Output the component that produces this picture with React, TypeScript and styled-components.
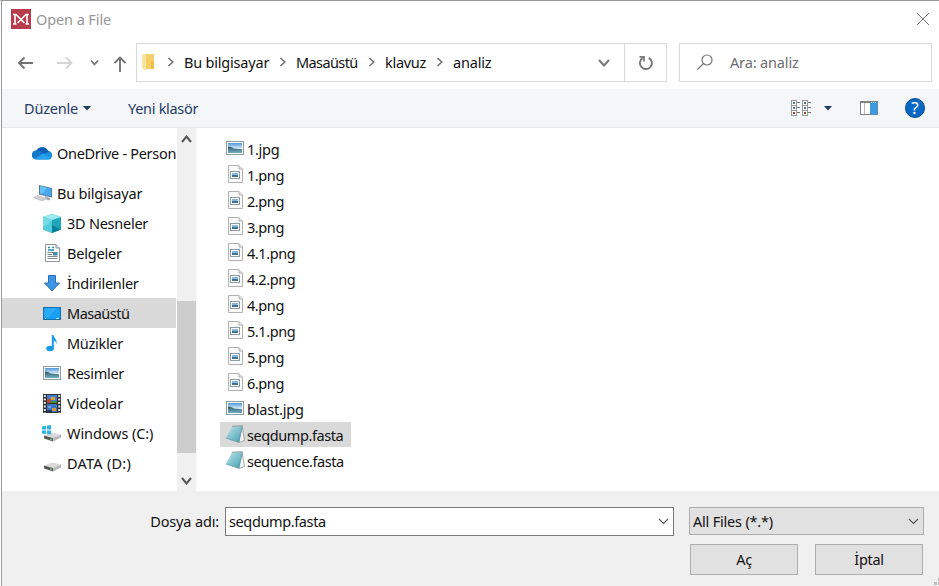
import React from "react";
import styled, { createGlobalStyle } from "styled-components";

const Global = createGlobalStyle`
  * { box-sizing: border-box; }
  body { margin: 0; background: #fff; overflow: hidden; }
  svg { display: block; flex: none; }
`;

const Dialog = styled.div`
  width: 939px;
  height: 586px;
  border-top: 1px solid #999;
  border-left: 1px solid #fff;
  background: #fff;
  font-family: "Noto Sans", "Open Sans", sans-serif;
  font-size: 14.5px;
  color: #111;
`;
const Frame = styled.div`
  height: 585px;
  border-left: 1px solid #999;
  display: flex;
  flex-direction: column;
`;
const Text = styled.span<{ $track?: number }>`
  white-space: nowrap;
  line-height: 20px;
  letter-spacing: ${(p) => p.$track ?? -0.3}px;
`;
const TitleBar = styled.header`
  height: 42px;
  display: flex;
  align-items: flex-start;
  padding: 8px 9px 0 9px;
  color: #969696;
`;
const Title = styled(Text)`
  margin-left: 5px;
  flex: 1;
`;
const CloseIcon = styled.svg`
  margin-top: 3px;
`;
const NavRow = styled.nav`
  height: 46px;
  display: flex;
  align-items: flex-start;
`;
const NavButtons = styled.div`
  width: 134px;
  height: 40px;
  display: flex;
`;
const PathBox = styled.div`
  width: 531px;
  height: 39px;
  border: 1px solid #d9d9d9;
  display: flex;
  align-items: center;
  padding-left: 2px;
`;
const Crumb = styled.div<{ $w: number }>`
  width: ${(p) => p.$w}px;
  padding-bottom: 2px;
  display: flex;
  align-items: center;
  gap: 10px;
`;
const PathEnd = styled.div`
  margin-left: auto;
  height: 37px;
  display: flex;
  align-items: center;
`;
const RefreshCell = styled.div`
  width: 42px;
  height: 37px;
  margin-left: 14px;
  border-left: 1px solid #d9d9d9;
  display: flex;
  align-items: center;
  justify-content: center;
`;
const SearchBox = styled.div`
  width: 253px;
  height: 39px;
  margin-left: 12px;
  border: 1px solid #d9d9d9;
  display: flex;
  align-items: center;
  gap: 16px;
  padding: 0 0 2px 16px;
  color: #6d6d6d;
`;
const CommandBar = styled.div`
  height: 39px;
  background: #f4f6f8;
  border-bottom: 1px solid #e6e8ea;
  display: flex;
  align-items: center;
  padding: 0 14px 0 22px;
  color: #1f3a66;
`;
const Menu = styled.div`
  width: 104px;
  display: flex;
  align-items: center;
  gap: 5px;
`;
const Tools = styled.div`
  margin-left: auto;
  display: flex;
  align-items: center;
`;
const ViewMenu = styled.div`
  display: flex;
  align-items: center;
  gap: 12px;
  margin-right: 28px;
`;
const HelpBadge = styled.div`
  width: 20px;
  height: 20px;
  margin-left: 27px;
  border-radius: 50%;
  border: 1px solid #064d93;
  background: #0868c4;
  color: #fff;
  font-size: 17px;
  line-height: 18px;
  text-align: center;
`;
const Body = styled.main`
  height: 363px;
  display: flex;
`;
const Tree = styled.ul`
  width: 174px;
  margin: 0 1px 0 0;
  padding: 10px 0 0;
  list-style: none;
  overflow: hidden;
`;
const TreeItem = styled.li<{ $root?: boolean; $selected?: boolean; $gap?: boolean }>`
  height: 30px;
  margin-bottom: ${(p) => (p.$gap ? 10 : 0)}px;
  padding-left: ${(p) => (p.$root ? 29 : 39)}px;
  background: ${(p) => (p.$selected ? "#d9d9d9" : "transparent")};
  display: flex;
  align-items: center;
  gap: 4px;
`;
const IconSlot = styled.span<{ $w: number }>`
  width: ${(p) => p.$w}px;
  height: 22px;
  flex: none;
  display: flex;
  align-items: center;
  justify-content: center;
`;
const FolderSlot = styled(IconSlot)`
  justify-content: flex-start;
  padding: 0 0 2px 2px;
`;
const ScrollBar = styled.div`
  width: 20px;
  height: 363px;
  background: #f0f0f0;
  border-right: 1px solid #f8f8f8;
  display: grid;
  grid-template-rows: 173px 152px 38px;
`;
const ScrollEnd = styled.div<{ $bottom?: boolean }>`
  display: flex;
  justify-content: center;
  align-items: ${(p) => (p.$bottom ? "flex-end" : "flex-start")};
  padding: 7px 0 6px;
`;
const Thumb = styled.div`
  background: #cdcdcd;
`;
const Files = styled.ul`
  margin: 0;
  padding: 8px 0 0 23px;
  list-style: none;
  display: flex;
  flex-direction: column;
  align-items: flex-start;
`;
const FileItem = styled.li<{ $selected?: boolean }>`
  height: 26px;
  width: 131px;
  border-bottom: 1px solid #fff;
  padding: 1px 0 0 5px;
  background: ${(p) => (p.$selected ? "#d9d9d9" : "transparent")};
  display: flex;
  align-items: center;
  gap: 2px;
`;
const FileIcon = styled(IconSlot)`
  margin-top: -3px;
`;
const Footer = styled.footer`
  flex: 1;
  background: #f0f0f0;
  display: grid;
  grid-template-columns: 217px 449px 235px;
  grid-template-rows: 29px 31px;
  column-gap: 6px;
  row-gap: 8px;
  padding-top: 16px;
  position: relative;
`;
const FieldLabel = styled.label`
  text-align: right;
  padding-top: 4px;
`;
const Field = styled.div`
  height: 29px;
  background: #fff;
  border: 1px solid #7a7a7a;
  display: flex;
  align-items: center;
  justify-content: space-between;
  padding: 0 4px 1px 3px;
`;
const Select = styled(Field)`
  height: 28px;
  margin-left: 9px;
  width: 235px;
  background: #e1e1e1;
  border-color: #adadad;
  padding: 0 4px 0 3px;
`;
const Actions = styled.div`
  grid-column: 3;
  margin-left: 10px;
  width: 233px;
  display: flex;
  justify-content: space-between;
`;
const Button = styled.button`
  width: 108px;
  height: 31px;
  padding: 0 0 2px;
  border: 1px solid #adadad;
  background: #e1e1e1;
  font: inherit;
  color: #111;
`;
const Grip = styled.svg`
  position: absolute;
  right: 0;
  bottom: 0;
`;

const Chevron = ({ w = 11, h = 6, color = "#666", sw = 2, up = false }) => (
  <svg width={w + 2} height={h + 2} viewBox={`-1 -1 ${w + 2} ${h + 2}`} fill="none" stroke={color} strokeWidth={sw}>
    <path d={up ? `M0 ${h}L${w / 2} .5L${w} ${h}` : `M0 0L${w / 2} ${h - 0.5}L${w} 0`} />
  </svg>
);
const CrumbArrow = () => (
  <svg width="7" height="10" viewBox="0 0 7 10" fill="none" stroke="#777" strokeWidth="1.7">
    <path d="M1.500 1L5.7 5L1.500 9" />
  </svg>
);
const Triangle = () => (
  <svg width="8" height="5" viewBox="0 0 8 5"><path d="M0 0H8L4 4.5Z" fill="#1f3a66" /></svg>
);
const AppLogo = () => (
  <svg width="20" height="20" viewBox="0 0 20 20">
    <rect width="20" height="20" fill="#b83c4c" />
    <path d="M2 5.5H5.5M4 5.5V15M2 15H5.5M18 5.5H14.5M16 5.5V15M18 15H14.5" stroke="#fff" strokeWidth="1.6" fill="none" />
    <path d="M5 5.5L13.5 14M15 5.5L6.5 14" stroke="#fff" strokeWidth="1.6" />
  </svg>
);
const NavIcons = () => (
  <svg width="134" height="40" viewBox="2 43 134 40" fill="none" strokeWidth="1.8">
    <path d="M33 63H19M24.5 57.5L19 63L24.5 68.5" stroke="#717171" />
    <path d="M57 63H71M66 57.5L71.5 63L66 68.5" stroke="#d5d5d5" />
    <path d="M91 60.5L94.5 64.5L98 60.5" stroke="#777" />
    <path d="M120 72V58M114.5 63L120 57.5L125.5 63" stroke="#717171" />
  </svg>
);
const FolderIcon = () => (
  <svg width="16" height="18" viewBox="1 0 16 18">
    <path d="M5 1H14V16H5Z" fill="#f5cf68" />
    <path d="M11 8H14V16H11Z" fill="#efbf50" />
    <path d="M2 1L6 2.5V17.5L2 15.5Z" fill="#fbe3a0" />
  </svg>
);
const RefreshIcon = () => (
  <svg width="16" height="16" viewBox="0 0 16 16" fill="none" stroke="#777" strokeWidth="1.9">
    <path d="M10.8 2.8A6 6 0 1 1 4.5 3.1" />
    <path d="M1.5 1.9H6V6.5" strokeWidth="1.7" />
  </svg>
);
const SearchIcon = () => (
  <svg width="18" height="18" viewBox="0 0 18 18" fill="none" stroke="#777" strokeWidth="1.2">
    <circle cx="11" cy="7" r="5" /><path d="M7.5 10.500L1.5 16.5" />
  </svg>
);
const ViewIcon = () => (
  <svg width="21" height="16" viewBox="0 0 21 16">
    {[0, 11].map((x) => [0, 5, 10].map((y) => (
      <g key={`${x}-${y}`}>
        <rect x={x + 0.5} y={y + 0.5} width="5" height="5" fill="#fff" stroke="#999" />
        <rect x={x + 2} y={y + 2} width="2" height="2" fill={y === 10 ? "#a33c2c" : "#54778c"} />
        <path d={`M${x + 6} ${y + 2.5}h3`} stroke="#777" />
      </g>
    )))}
  </svg>
);
const PaneIcon = () => (
  <svg width="18" height="14" viewBox="0 0 18 14">
    <rect x=".5" y=".5" width="17" height="13" fill="#fff" stroke="#808080" />
    <path d="M1 1.5H17" stroke="#888" />
    <path d="M4.5 2V13" stroke="#bbb" />
    <rect x="10" y="1" width="7.5" height="12.5" fill="#3d9ae2" />
    <path d="M11 1.5H17" stroke="#c5e4f8" strokeDasharray="1 1" />
  </svg>
);
const CloudIcon = () => (
  <svg width="21" height="14" viewBox="0 0 21 14">
    <path d="M4.5 13.5A4.4 4.4 0 0 1 4.5 4.6A6.5 6.5 0 0 1 16 4.8A4.4 4.4 0 0 1 16.5 13.5Z" fill="#1490df" />
    <path d="M4.5 4.6A6.5 6.5 0 0 1 16 4.8L17 6L9.5 8.5Z" fill="#0f5fb5" />
    <path d="M4.5 4.6Q8 4.5 11 7.5L2.5 13A4.4 4.4 0 0 1 4.5 4.6Z" fill="#1377cc" />
    <path d="M2.5 13L11 7.5L19.5 12Q18.5 13.5 16.5 13.5H4.5Z" fill="#28a0eb" />
  </svg>
);
const ComputerIcon = () => (
  <svg width="21" height="20" viewBox="0 0 21 20">
    <path d="M7 2L20 5V14.5L7 11.5Z" fill="#527b9a" />
    <path d="M8 3L19 5.6V13.2L8 10.6Z" fill="#46abf0" />
    <path d="M8 3L15 4.7L10 11L8 10.6Z" fill="#66c0f7" />
    <path d="M13 13L13 16L18 17.5V15Z" fill="#9daab2" />
    <path d="M1 14.5L6 12.5L15 15.5L10 18Z" fill="#dde0e3" stroke="#b4b8bc" strokeWidth=".6" />
    <path d="M3 14.7L12 17M5 13.7L13.5 16.2" stroke="#aaa" strokeWidth=".5" />
  </svg>
);
const CubeIcon = () => (
  <svg width="18" height="19" viewBox="0 0 18 19">
    <path d="M9 0L18 3V15.5L9 19L0 15.5V3Z" fill="#20a6bc" />
    <path d="M0 3L9 0L18 3L9 6Z" fill="#9eebf2" />
    <path d="M0 3L9 6V19L0 15.5Z" fill="#54cddb" />
    <path d="M0 3L9 6L4 11L0 13Z" fill="#75dce6" />
    <path d="M9 11L18 15.5L9 19Z" fill="#08819b" />
  </svg>
);
const DocIcon = () => (
  <svg width="15" height="18" viewBox="0 0 15 18">
    <path d="M.5.5H11L14.5 4V17.5H.5Z" fill="#fff" stroke="#8c9499" />
    <path d="M11 .5V4H14.5" fill="#ddd" stroke="#8c9499" />
    <path d="M3 3.5H5M7 3.5H9M3 6H9" stroke="#238fb7" strokeWidth="1.5" />
    <path d="M2.5 8.5H12.5M2.5 10.5H7M2.5 12.5H12.5M2.5 14.5H12.5" stroke="#7b8990" />
    <path d="M8 8.5H12.5V11.5H8Z" fill="#3b8bb0" />
  </svg>
);
const DownIcon = () => (
  <svg width="16" height="17" viewBox="0 0 16 17">
    <path d="M4.5.5H11.5V8H15.5L8 16L.5 8H4.5Z" fill="#3c96e5" stroke="#2d71b4" />
  </svg>
);
const DesktopIcon = () => (
  <svg width="18" height="13" viewBox="0 0 18 13">
    <rect x=".5" y=".5" width="17" height="12" fill="#17a0f5" stroke="#126fae" />
    <path d="M1 1H14L5 11H1Z" fill="#36b2fa" opacity=".55" />
    <path d="M2 11.5H3M13 11.500H16" stroke="#cdeaff" />
  </svg>
);
const MusicIcon = () => (
  <svg width="12" height="18" viewBox="0 0 12 18">
    <ellipse cx="4" cy="14.5" rx="3.8" ry="2.8" fill="#189bea" />
    <path d="M5.8 1H7.6C7.8 4.5 12 5.5 10.2 10.5C10.5 8 9 6.8 7.8 6.5V14.5H5.8Z" fill="#189bea" />
  </svg>
);
const PhotoIcon = () => (
  <svg width="18" height="14" viewBox="0 0 18 14">
    <defs>
      <linearGradient id="sky" x2="0" y2="1"><stop stopColor="#4f97d8" /><stop offset=".55" stopColor="#d8ecf8" /></linearGradient>
      <linearGradient id="lake" x2="0" y2="1"><stop stopColor="#2f5a60" /><stop offset="1" stopColor="#74adc8" /></linearGradient>
    </defs>
    <rect x=".5" y=".5" width="17" height="13" fill="#fff" stroke="#8f9ba4" />
    <rect x="2" y="2" width="14" height="10" fill="url(#sky)" />
    <path d="M2 5.5Q5 5.5 8 7.5L16 8.2V12H2Z" fill="url(#lake)" />
  </svg>
);
const FilmIcon = () => (
  <svg width="18" height="19" viewBox="0 0 18 19">
    <rect width="18" height="19" fill="#303030" />
    <path d="M1.8 1V19M16.2 1V19" stroke="#e8e8e8" strokeWidth="2" strokeDasharray="2 1.5" />
    <rect x="4" y="1" width="10" height="8" fill="#477fd0" />
    <rect x="4" y="10" width="10" height="8" fill="#3976cc" />
    <path d="M8 3H12V6H8Z" fill="#e0a136" /><path d="M4 5H8V9H4Z" fill="#b94b36" /><path d="M8 7H14V9H8Z" fill="#3f913c" />
    <path d="M5 12H8V14H5Z" fill="#69a2e5" /><path d="M9 14H13V17H9Z" fill="#d59638" /><path d="M4 16H9V18H4Z" fill="#213d65" />
  </svg>
);
const DriveIcon = ({ windows = false }) => (
  <svg width="20" height="20" viewBox="0 0 20 20">
    <path d="M2 12.500L10 9.500L19 11.500L11 15Z" fill="#dadada" />
    <path d="M2 12.500L11 15V18.5L2 15.5Z" fill="#666" />
    <path d="M11 15L19 11.500V14.5L11 18.5Z" fill="#b8b8b8" />
    <path d="M3 14.300L9 16" stroke="#444" /><rect x="8" y="15.5" width="1.5" height="1.5" fill="#68d56c" />
    {windows && <path d="M0 3.500L4 2.8V6.500H0ZM5 2.6L9 2V6.500H5ZM0 7.500H4V11L0 10.500ZM5 7.500H9V11.500L5 11Z" fill="#2ab4e6" />}
  </svg>
);
const PngIcon = () => (
  <svg width="15" height="18" viewBox="0 0 15 18">
    <path d="M.5.5H11L14.5 4V17.5H.5Z" fill="#fafafa" stroke="#b2b2b2" />
    <path d="M11 .5V4H14.5" fill="#e5e5e5" stroke="#b2b2b2" />
    <rect x="2.5" y="6.5" width="9" height="7" fill="#fff" stroke="#8d9ba6" />
    <rect x="4" y="8" width="6" height="4" fill="#82b8e2" /><path d="M4 10L10 10V12H4Z" fill="#46708f" />
  </svg>
);
const NotepadIcon = () => (
  <svg width="19" height="18" viewBox="0 0 19 18">
    <defs>
      <linearGradient id="cover" x1="0" y1="0" x2="1" y2="1"><stop stopColor="#c3e8ec" /><stop offset="1" stopColor="#3f9db1" /></linearGradient>
    </defs>
    <path d="M16 1L18.5 15.500L13 17.5Z" fill="#f4f7f8" stroke="#8a989d" strokeWidth=".8" />
    <path d="M6 1.500L16.500 1L12.500 17.300L0 13Z" fill="url(#cover)" />
    <path d="M0 13L12.500 17.3L16.300 1.5" fill="none" stroke="#5b929d" strokeWidth=".7" />
    <path d="M6 1.3L16.5 .8" stroke="#8c9799" strokeWidth="1.1" />
  </svg>
);

const places = [
  { name: "3D Nesneler", icon: <CubeIcon />, track: -0.25 },
  { name: "Belgeler", icon: <DocIcon />, track: -0.2 },
  { name: "İndirilenler", icon: <DownIcon /> },
  { name: "Masaüstü", icon: <DesktopIcon />, track: -0.5 },
  { name: "Müzikler", icon: <MusicIcon /> },
  { name: "Resimler", icon: <PhotoIcon /> },
  { name: "Videolar", icon: <FilmIcon />, track: 0 },
  { name: "Windows (C:)", icon: <DriveIcon windows />, track: -0.1 },
  { name: "DATA (D:)", icon: <DriveIcon />, track: 0.25 },
];
const files = ["1.jpg", "1.png", "2.png", "3.png", "4.1.png", "4.2.png", "4.png", "5.1.png", "5.png", "6.png", "blast.jpg", "seqdump.fasta", "sequence.fasta"];
const fileIcon = (name: string) =>
  name.endsWith("jpg") ? <PhotoIcon /> : name.endsWith("png") ? <PngIcon /> : <NotepadIcon />;
const fileTrack = (name: string) => (name === "blast.jpg" ? -0.2 : name.endsWith("jpg") ? -0.3 : -0.42);
const crumbs = [
  { name: "Bu bilgisayar", w: 112, track: -0.2 },
  { name: "Masaüstü", w: 89, track: -0.6 },
  { name: "klavuz", w: 68, track: -0.3 },
  { name: "analiz", w: 60, track: -0.2 },
];

export default function App() {
  return (
    <Dialog>
      <Global />
      <Frame>
        <TitleBar>
          <AppLogo />
          <Title $track={-0.1}>Open a File</Title>
          <CloseIcon width="14" height="14" viewBox="0 0 14 14" stroke="#777" strokeWidth="1">
            <path d="M1 1L13 13M13 1L1 13" />
          </CloseIcon>
        </TitleBar>
        <NavRow>
          <NavButtons><NavIcons /></NavButtons>
          <PathBox>
            <FolderSlot $w={28}><FolderIcon /></FolderSlot>
            {crumbs.map((c) => (
              <Crumb key={c.name} $w={c.w}><CrumbArrow /><Text $track={c.track}>{c.name}</Text></Crumb>
            ))}
            <PathEnd>
              <Chevron w={10} h={6} color="#777" />
              <RefreshCell><RefreshIcon /></RefreshCell>
            </PathEnd>
          </PathBox>
          <SearchBox><SearchIcon /><Text $track={-0.15}>Ara: analiz</Text></SearchBox>
        </NavRow>
        <CommandBar>
          <Menu><Text $track={-0.2}>Düzenle</Text><Triangle /></Menu>
          <Text>Yeni klasör</Text>
          <Tools>
            <ViewMenu><ViewIcon /><Triangle /></ViewMenu>
            <PaneIcon />
            <HelpBadge>?</HelpBadge>
          </Tools>
        </CommandBar>
        <Body>
          <Tree>
            <TreeItem $root $gap><IconSlot $w={22}><CloudIcon /></IconSlot><Text>OneDrive - Person</Text></TreeItem>
            <TreeItem $root><IconSlot $w={22}><ComputerIcon /></IconSlot><Text $track={-0.2}>Bu bilgisayar</Text></TreeItem>
            {places.map((p) => (
              <TreeItem key={p.name} $selected={p.name === "Masaüstü"}>
                <IconSlot $w={22}>{p.icon}</IconSlot><Text $track={p.track}>{p.name}</Text>
              </TreeItem>
            ))}
          </Tree>
          <ScrollBar>
            <ScrollEnd><Chevron w={9} h={6} color="#555" up /></ScrollEnd>
            <Thumb />
            <ScrollEnd $bottom><Chevron w={9} h={6} color="#555" /></ScrollEnd>
          </ScrollBar>
          <Files>
            {files.map((f) => (
              <FileItem key={f} $selected={f === "seqdump.fasta"}>
                <FileIcon $w={20}>{fileIcon(f)}</FileIcon><Text $track={fileTrack(f)}>{f}</Text>
              </FileItem>
            ))}
          </Files>
        </Body>
        <Footer>
          <FieldLabel><Text $track={-0.15}>Dosya adı:</Text></FieldLabel>
          <Field><Text $track={-0.38}>seqdump.fasta</Text><Chevron w={9} h={5} color="#555" sw={1.1} /></Field>
          <Select><Text $track={-0.2}>All Files (*.*)</Text><Chevron w={9} h={5} color="#555" sw={1.1} /></Select>
          <Actions>
            <Button><Text>Aç</Text></Button>
            <Button><Text>İptal</Text></Button>
          </Actions>
          <Grip width="5" height="8" viewBox="0 0 5 8" fill="#bcbcbc">
            <path d="M0 4H3V7H0ZM4 0H5V3H4ZM4 4H5V7H4Z" />
          </Grip>
        </Footer>
      </Frame>
    </Dialog>
  );
}
